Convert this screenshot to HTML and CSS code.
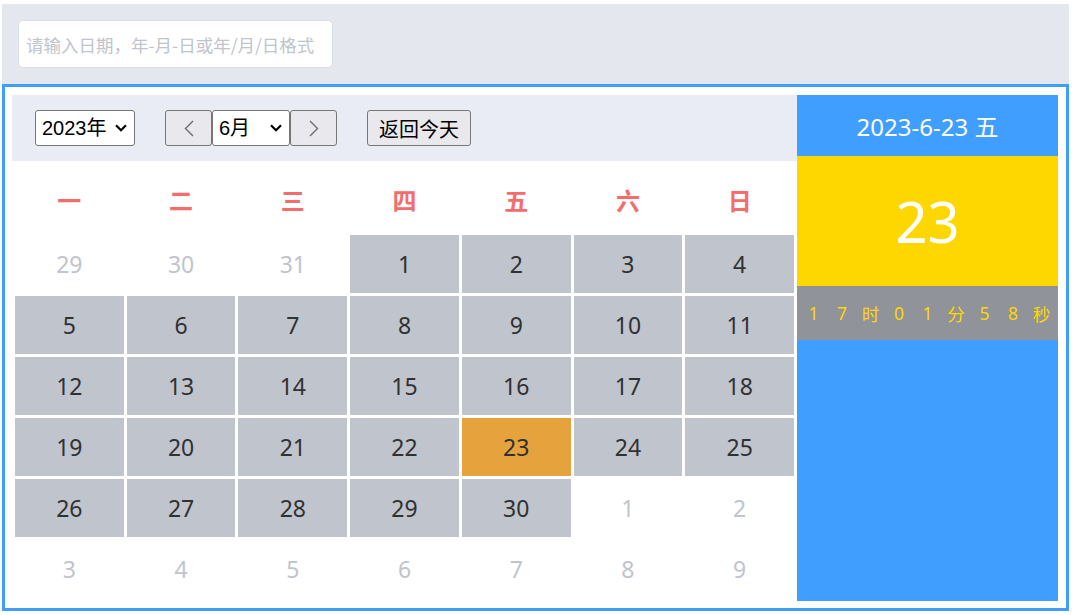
FILE: index.html
```html
<!DOCTYPE html>
<html lang="zh-CN">
<head>
<meta charset="utf-8">
<title>日历</title>
<link rel="stylesheet" href="styles.css">
</head>
<body>
<div class="topbar">
  <input class="date-input" type="text" placeholder="请输入日期，年-月-日或年/月/日格式">
</div>
<div class="calendar-box">
  <div class="main">
    <div class="toolbar">
      <div class="sel-wrap sel-year">
        <select class="sel"><option>2023年</option></select>
        <svg class="chev" width="12" height="8" viewBox="0 0 12 8"><path d="M1 1.2 L6 6.2 L11 1.2" fill="none" stroke="#000" stroke-width="2.2"/></svg>
      </div>
      <div class="month-group">
        <button class="nav-btn" type="button" aria-label="上一月">
          <svg width="12" height="17" viewBox="0 0 12 17"><path d="M10 1 L2.5 8.5 L10 16" fill="none" stroke="#6d6d6d" stroke-width="1.4"/></svg>
        </button>
        <div class="sel-wrap sel-month">
          <select class="sel"><option>6月</option></select>
          <svg class="chev" width="12" height="8" viewBox="0 0 12 8"><path d="M1 1.2 L6 6.2 L11 1.2" fill="none" stroke="#000" stroke-width="2.2"/></svg>
        </div>
        <button class="nav-btn" type="button" aria-label="下一月">
          <svg width="12" height="17" viewBox="0 0 12 17"><path d="M2 1 L9.5 8.5 L2 16" fill="none" stroke="#6d6d6d" stroke-width="1.4"/></svg>
        </button>
      </div>
      <button class="today-btn" type="button">返回今天</button>
    </div>
    <div class="grid">
      <div class="wk">一</div><div class="wk">二</div><div class="wk">三</div><div class="wk">四</div><div class="wk">五</div><div class="wk">六</div><div class="wk">日</div>
      <div class="day other">29</div><div class="day other">30</div><div class="day other">31</div><div class="day">1</div><div class="day">2</div><div class="day">3</div><div class="day">4</div>
      <div class="day">5</div><div class="day">6</div><div class="day">7</div><div class="day">8</div><div class="day">9</div><div class="day">10</div><div class="day">11</div>
      <div class="day">12</div><div class="day">13</div><div class="day">14</div><div class="day">15</div><div class="day">16</div><div class="day">17</div><div class="day">18</div>
      <div class="day">19</div><div class="day">20</div><div class="day">21</div><div class="day">22</div><div class="day today">23</div><div class="day">24</div><div class="day">25</div>
      <div class="day">26</div><div class="day">27</div><div class="day">28</div><div class="day">29</div><div class="day">30</div><div class="day other">1</div><div class="day other">2</div>
      <div class="day other">3</div><div class="day other">4</div><div class="day other">5</div><div class="day other">6</div><div class="day other">7</div><div class="day other">8</div><div class="day other">9</div>
    </div>
  </div>
  <div class="side">
    <div class="side-date">2023-6-23 五</div>
    <div class="side-day">23</div>
    <div class="side-time"><span>1</span><span>7</span><span>时</span><span>0</span><span>1</span><span>分</span><span>5</span><span>8</span><span>秒</span></div>
  </div>
</div>
</body>
</html>
```
FILE: styles.css
```css
html, body {
  background: #ffffff;
}
body {
  margin: 4px 3px 0 2px;
  font-family: "Noto Sans", "Noto Sans CJK SC", sans-serif;
}
.topbar {
  height: 80px;
  box-sizing: border-box;
  padding: 16px;
  background: #e4e7ee;
}
.date-input {
  display: block;
  width: 315px;
  height: 48px;
  box-sizing: border-box;
  border: 1px solid #dcdfe6;
  border-radius: 5px;
  padding: 0 7px;
  font-size: 17.5px;
  font-family: "Noto Sans CJK SC", sans-serif;
  color: #606266;
  background: #fff;
  outline: none;
}
.date-input::placeholder {
  color: #c0c4cc;
}
.calendar-box {
  height: 527px;
  box-sizing: border-box;
  border: 3px solid #409eff;
  padding: 8px 7px 7px 7px;
  display: flex;
}
.main {
  width: 785px;
  display: flex;
  flex-direction: column;
}
.toolbar {
  height: 66px;
  flex: none;
  background: #e9ecf4;
  display: flex;
  align-items: center;
  padding-left: 23px;
  box-sizing: border-box;
}
.sel-wrap {
  position: relative;
  height: 36px;
}
.sel {
  -webkit-appearance: none;
  appearance: none;
  width: 100%;
  height: 36px;
  box-sizing: border-box;
  font-size: 20px;
  font-family: "Liberation Sans", "Noto Sans CJK SC", sans-serif;
  color: #000;
  background: #fff;
  border: 1px solid #767676;
  border-radius: 3px;
  padding: 0 0 0 6px;
  outline: none;
}
.chev {
  position: absolute;
  right: 8px;
  top: 14px;
  pointer-events: none;
}
.sel-year {
  width: 100px;
}
.month-group {
  display: flex;
  margin-left: 30px;
}
.sel-month {
  width: 78px;
}
.nav-btn {
  width: 47px;
  height: 36px;
  box-sizing: border-box;
  border: 1px solid #767676;
  border-radius: 3px;
  background: #e9e9ed;
  display: flex;
  align-items: center;
  justify-content: center;
  padding: 0;
}
.today-btn {
  margin-left: 30px;
  width: 104px;
  height: 36px;
  box-sizing: border-box;
  border: 1px solid #767676;
  border-radius: 3px;
  background: #e9e9ed;
  font-size: 20px;
  font-family: "Noto Sans CJK SC", sans-serif;
  color: #000;
  padding: 0;
}
.grid {
  flex: 1;
  display: grid;
  grid-template-columns: repeat(7, 1fr);
  grid-template-rows: 68px repeat(6, 58px);
  gap: 3px;
  padding: 3px;
}
.wk {
  display: flex;
  align-items: center;
  justify-content: center;
  color: #f56c6c;
  font-weight: bold;
  font-size: 24px;
  font-family: "Noto Sans CJK SC", sans-serif;
  padding-top: 2px;
}
.day {
  display: flex;
  align-items: center;
  justify-content: center;
  background: #c0c4cc;
  color: #303133;
  font-size: 23px;
}
.day.other {
  background: transparent;
  color: #c0c4cc;
}
.day.today {
  background: #e6a23c;
}
.side {
  width: 261px;
  background: #409eff;
  display: flex;
  flex-direction: column;
}
.side-date {
  height: 61px;
  display: flex;
  align-items: center;
  justify-content: center;
  color: #fff;
  font-size: 24px;
}
.side-day {
  height: 130px;
  background: #ffd700;
  display: flex;
  align-items: center;
  justify-content: center;
  color: #fff;
  font-size: 56px;
}
.side-time {
  height: 54px;
  background: #909399;
  display: flex;
  align-items: center;
  justify-content: center;
  color: #ffd700;
  font-size: 17.5px;
}
.side-time span {
  width: 28.5px;
  text-align: center;
}
```
